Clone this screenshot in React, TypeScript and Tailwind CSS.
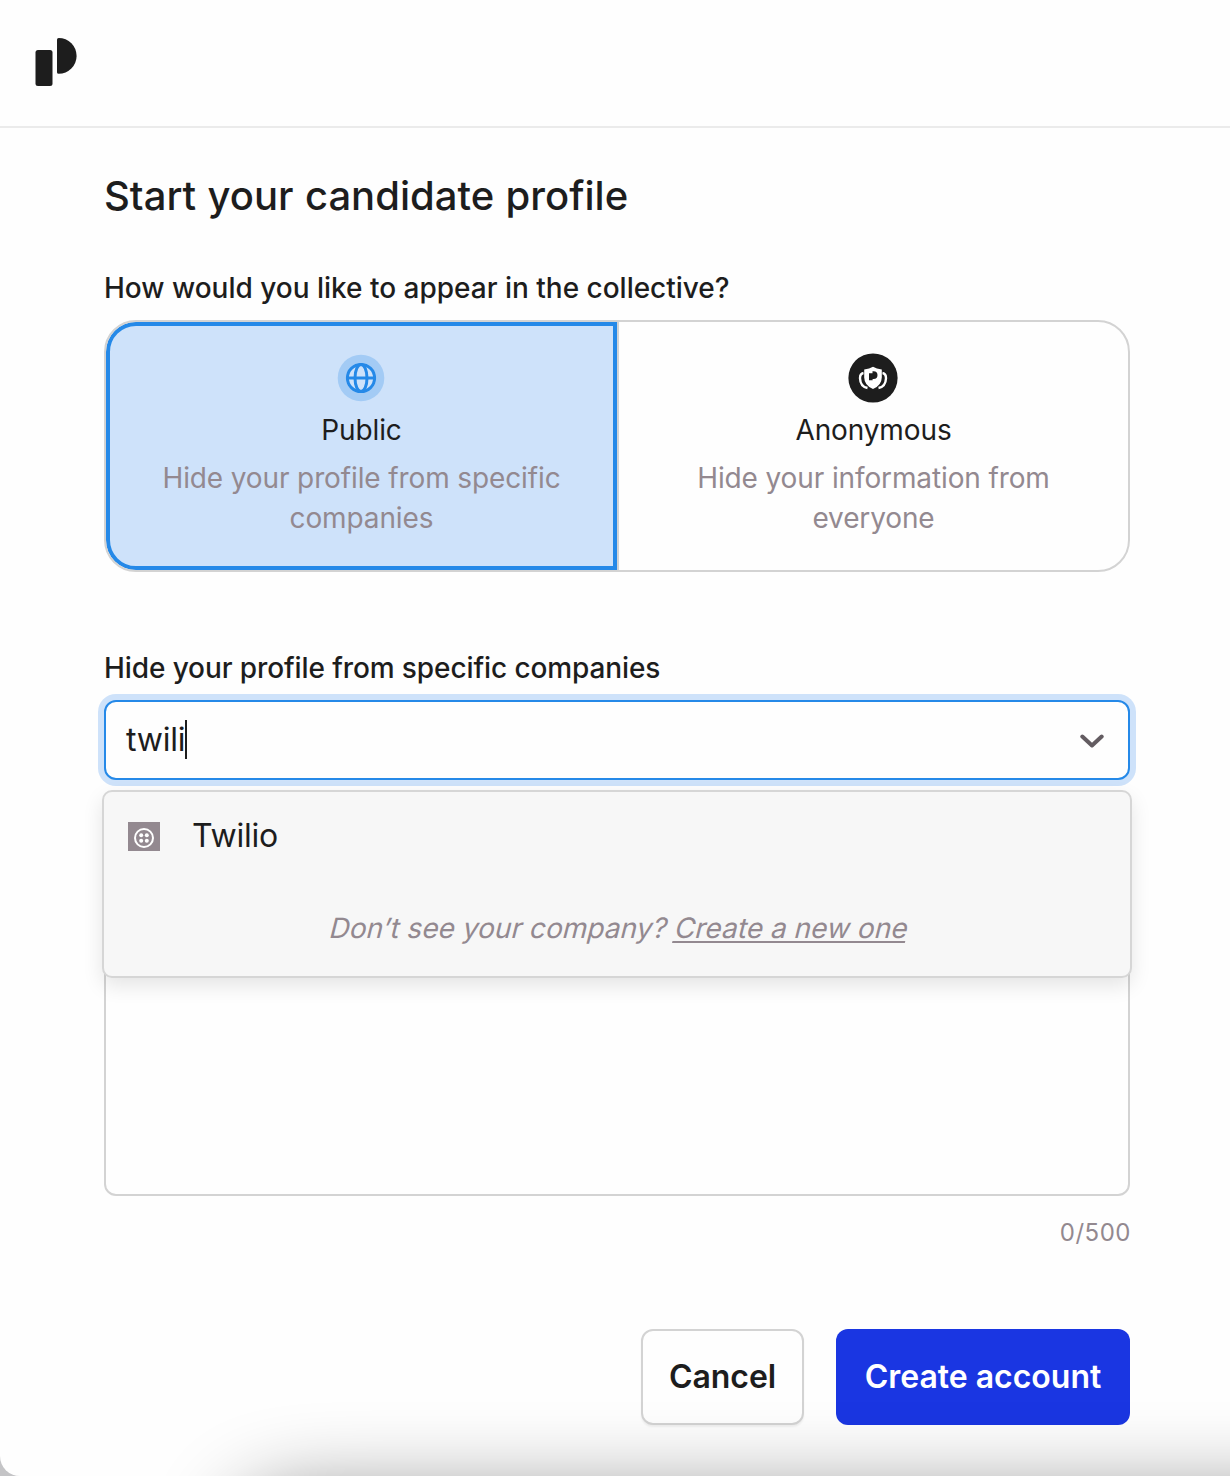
import { useState } from "react";

function Logo() {
  return (
    <svg className="h-12 w-[42px]" viewBox="0 0 42 48" fill="#1d1d1d">
      <rect x="0.5" y="12" width="17" height="36" rx="2.5" />
      <path d="M22 1.500Q22 0 23.700 0A17.900 17.900 0 0 1 23.700 35.800Q22 35.800 22 34.300Z" />
    </svg>
  );
}

function GlobeIcon() {
  return (
    <svg className="h-[50px] w-[50px]" viewBox="0 0 50 50" fill="none">
      <circle cx="25" cy="25" r="23.3" fill="#a3cbf5" />
      <circle cx="25" cy="25" r="15" fill="#cee2fa" />
      <g stroke="#2589e8" strokeWidth="3">
        <circle cx="25" cy="25" r="13.6" />
        <ellipse cx="25" cy="25" rx="6" ry="13.6" />
        <path d="M11.4 25H38.6" />
      </g>
    </svg>
  );
}

function ShieldIcon() {
  return (
    <svg className="h-[50px] w-[50px]" viewBox="0 0 50 50" fill="none">
      <circle cx="25" cy="25" r="24.6" fill="#1d1d1d" />
      <path
        d="M15.500 20Q12 20.500 12 25.200Q12.300 33.500 19.500 35M34.500 20Q38 20.500 38 25.200Q37.700 33.500 30.500 35"
        stroke="#fff"
        strokeWidth="2.4"
      />
      <path
        d="M25 13.800Q28.500 15.700 33.800 16.600V24.500Q33.600 32.500 25 36Q16.400 32.500 16.200 24.500V16.600Q21.500 15.700 25 13.800Z"
        fill="#fff"
      />
      <path d="M21 20.300H24.500V18.200H25.600A3.900 3.900 0 0 1 25.600 26H24.600V27.300H21Z" fill="#1d1d1d" />
    </svg>
  );
}

function TwilioIcon() {
  return (
    <svg className="h-[29px] w-8" viewBox="0 0 32 29">
      <rect width="32" height="29" fill="#938990" />
      <circle cx="16" cy="16" r="9" fill="none" stroke="#fff" strokeWidth="2" />
      <g fill="#fff">
        <circle cx="13.200" cy="13.200" r="2" />
        <circle cx="18.800" cy="13.200" r="2" />
        <circle cx="13.200" cy="18.800" r="2" />
        <circle cx="18.800" cy="18.800" r="2" />
      </g>
    </svg>
  );
}

export default function App() {
  const [visibility, setVisibility] = useState("public");
  return (
    <div className="relative h-[1476px] w-[1230px] overflow-hidden bg-[#c4c4c6] font-['Inter',sans-serif] text-[#1d1d1d]">
      <div className="flex h-full flex-col rounded-bl-[20px] bg-[#fefefe]">
        <header className="flex h-32 shrink-0 items-start border-b-2 border-[#ebebeb] pt-[38px] pl-[35px]">
          <Logo />
        </header>
        <main className="flex flex-col px-[104px] pr-[100px]">
          <h1 className="mt-11 h-12 text-[40px] leading-[48px] font-medium tracking-[0.01px] whitespace-nowrap [word-spacing:0.7px]">
            Start your candidate profile
          </h1>
          <h2 className="mt-12 h-10 text-[28px] leading-10 font-medium tracking-[-0.01px] whitespace-nowrap">
            How would you like to appear in the collective?
          </h2>
          <div className="mt-3 grid h-[252px] grid-cols-[513px_1fr] overflow-hidden rounded-[32px] border-2 border-[#d3d3d3] text-center text-[28px] leading-10 tracking-[-0.12px]">
            <button
              onClick={() => setVisibility("public")}
              aria-pressed={visibility === "public"}
              className="flex border-r-2 border-[#d3d3d3] bg-[#d3d3d3]"
            >
              <span className="flex h-full w-full flex-col items-center rounded-l-[30px] border-4 border-[#2589e8] bg-[#cee2fa] pt-[27px]">
                <span className="mr-0.5">
                  <GlobeIcon />
                </span>
                <span className="mt-[7px]">Public</span>
                <span className="mt-2 whitespace-nowrap text-[#938990]">
                  Hide your profile from specific
                  <br />
                  companies
                </span>
              </span>
            </button>
            <button
              onClick={() => setVisibility("anonymous")}
              aria-pressed={visibility === "anonymous"}
              className="flex flex-col items-center justify-start pt-[31px]"
            >
              <span className="mr-0.5">
                <ShieldIcon />
              </span>
              <span className="mt-[7px]">Anonymous</span>
              <span className="mt-2 whitespace-nowrap text-[#938990]">
                Hide your information from
                <br />
                everyone
              </span>
            </button>
          </div>
          <h2 className="mt-[76px] h-10 text-[28px] leading-10 font-medium tracking-[-0.1px] whitespace-nowrap">
            Hide your profile from specific companies
          </h2>
          <div className="mt-3 flex h-20 items-center rounded-xl border-2 border-[#2589e8] bg-[#fefefe] px-5 ring-6 ring-[#cee2fa]">
            <span className="text-[32px] leading-10 tracking-[-0.2px]">twili</span>
            <span className="-mt-px h-[39px] w-0.5 bg-[#1d1d1d]" />
            <svg className="mt-0.5 mr-1 ml-auto h-4 w-6" viewBox="0 0 24 16" fill="none">
              <path d="M2.300 3.500L12 12.500L21.700 3.500" stroke="#635c61" strokeWidth="4" strokeLinecap="round" strokeLinejoin="round" />
            </svg>
          </div>
          <div className="relative mt-3 h-[404px] rounded-xl border-2 border-[#d3d3d3]">
            <div className="absolute -top-1 -left-1 flex h-[188px] w-[1030px] flex-col rounded-[10px] border-2 border-[#d6d6d6] bg-[#f7f7f7] shadow-[0_8px_20px_rgba(0,0,0,0.1)]">
              <div className="mt-6 ml-6 flex h-10 items-center gap-8">
                <TwilioIcon />
                <span className="text-[32px] leading-10 tracking-[-0.2px]">Twilio</span>
              </div>
              <p className="mt-[52px] ml-[5px] flex -skew-x-[14deg] justify-center gap-2 text-[28px] leading-10 tracking-[0.03px] text-[#938990]">
                <span>Don’t see your company?</span>
                <span className="underline decoration-2 underline-offset-[3px] [text-decoration-skip-ink:none]">Create a new one</span>
              </p>
            </div>
          </div>
          <div className="mt-[21px] -mr-px text-right text-2xl leading-8 tracking-[0.5px] text-[#938990]">0/500</div>
          <div className="mt-20 flex justify-end gap-8">
            <button className="h-24 w-[163px] rounded-xl border-2 border-[#d3d3d3] bg-[#fefefe] text-[32px] font-semibold tracking-[-0.05px] shadow-[0_2px_2px_rgba(0,0,0,0.06)]">
              Cancel
            </button>
            <button className="h-24 w-[294px] rounded-xl bg-[#1a36e2] text-[32px] font-semibold tracking-[-0.02px] whitespace-nowrap text-white">
              Create account
            </button>
          </div>
        </main>
      </div>
      <div className="pointer-events-none absolute top-[1496px] left-[235px] h-40 w-[1200px] rounded-[60px] shadow-[0_0_85px_rgba(0,0,0,0.48)]" />
    </div>
  );
}
